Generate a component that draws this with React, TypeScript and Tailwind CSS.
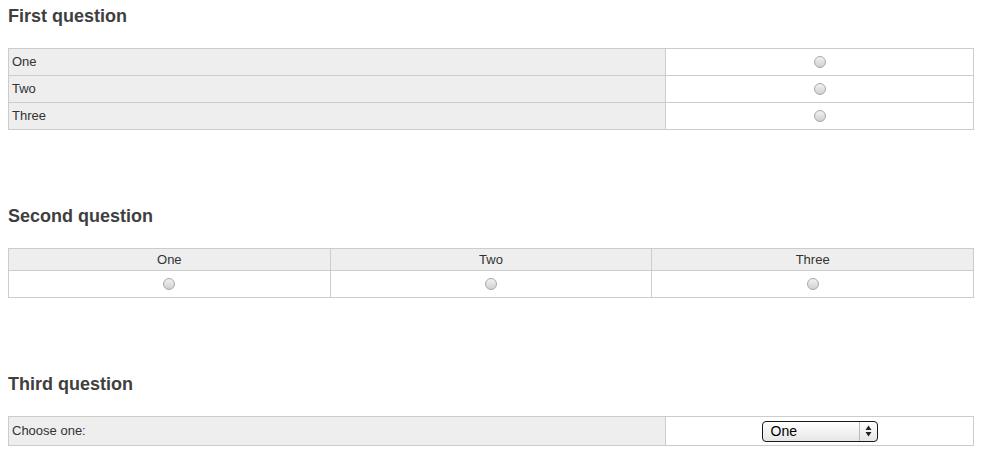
import type { ReactNode } from "react";

const font = { fontFamily: '"Liberation Sans", Arial, sans-serif' };

function Radio() {
  return (
    <span className="block mx-auto w-[12px] h-[12px] rounded-full border border-[#a9a9a9] bg-gradient-to-b from-[#f2f2f2] to-[#d0d0d0]" />
  );
}

function Heading({ children }: { children: ReactNode }) {
  return (
    <h3 className="h-[32px] leading-[32px] text-[18px] font-bold text-[#3f3f3f]">
      {children}
    </h3>
  );
}

function FirstQuestion() {
  const rows = ["One", "Two", "Three"];
  return (
    <table className="w-[966px] border-collapse table-fixed mt-[16px]">
      <colgroup>
        <col className="w-[657px]" />
        <col />
      </colgroup>
      <tbody>
        {rows.map((r) => (
          <tr key={r} className="h-[27px]">
            <td className="border border-[#cccccc] bg-[#eeeeee] px-[3px] text-[13px] text-[#333]">
              {r}
            </td>
            <td className="border border-[#cccccc] p-0">
              <Radio />
            </td>
          </tr>
        ))}
      </tbody>
    </table>
  );
}

function SecondQuestion() {
  const cols = ["One", "Two", "Three"];
  return (
    <table className="w-[966px] border-collapse table-fixed mt-[16px]">
      <thead>
        <tr className="h-[22px]">
          {cols.map((c) => (
            <th
              key={c}
              className="border border-[#cccccc] bg-[#eeeeee] font-normal text-[13px] text-[#333] text-center"
            >
              {c}
            </th>
          ))}
        </tr>
      </thead>
      <tbody>
        <tr className="h-[27px]">
          {cols.map((c) => (
            <td key={c} className="border border-[#cccccc] p-0">
              <Radio />
            </td>
          ))}
        </tr>
      </tbody>
    </table>
  );
}

function ThirdQuestion() {
  return (
    <table className="w-[966px] border-collapse table-fixed mt-[16px]">
      <colgroup>
        <col className="w-[657px]" />
        <col />
      </colgroup>
      <tbody>
        <tr className="h-[29px]">
          <td className="border border-[#cccccc] bg-[#eeeeee] px-[3px] text-[13px] text-[#333]">
            Choose one:
          </td>
          <td className="border border-[#cccccc] p-0">
            <div className="flex justify-center">
              <div className="flex items-center w-[116px] h-[21px] rounded-[4px] border border-[#1a1a1a] bg-gradient-to-b from-[#ffffff] to-[#e6e6e6]">
                <span className="flex-1 pl-[8px] text-[14px] text-black leading-none">One</span>
                <span className="w-[18px] h-full border-l border-[#bbbbbb] flex items-center justify-center">
                  <svg width="7" height="12" viewBox="0 0 7 12">
                    <path d="M3.5 0.5 L6.5 5 L0.5 5 Z" fill="#222" />
                    <path d="M3.5 11.5 L6.5 7 L0.5 7 Z" fill="#222" />
                  </svg>
                </span>
              </div>
            </div>
          </td>
        </tr>
      </tbody>
    </table>
  );
}

export default function App() {
  return (
    <div className="w-[981px] h-[452px] bg-white pl-[8px] overflow-hidden" style={font}>
      <Heading>First question</Heading>
      <FirstQuestion />
      <div className="mt-[70px]">
        <Heading>Second question</Heading>
        <SecondQuestion />
      </div>
      <div className="mt-[70px]">
        <Heading>Third question</Heading>
        <ThirdQuestion />
      </div>
    </div>
  );
}
